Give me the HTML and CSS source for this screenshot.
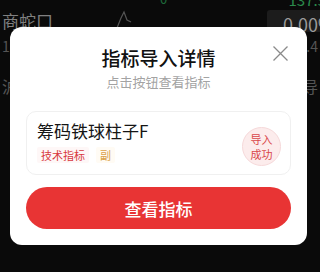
FILE: index.html
```html
<!DOCTYPE html>
<html lang="zh-CN">
<head>
<meta charset="utf-8">
<link rel="stylesheet" href="styles.css">
</head>
<body>
<div class="app">
  <div class="row row-top">
    <span class="zero">0</span>
    <span class="price">137.5</span>
  </div>
  <div class="row row-name">
    <span class="name">商蛇口</span>
    <svg class="spark" width="30" height="22" viewBox="0 0 30 22"><path d="M2 20 L10 18 L14 8 L17 2 L20 10 L24 12" fill="none" stroke="#555" stroke-width="1.2"/></svg>
    <span class="pct">0.00%</span>
  </div>
  <div class="row row-sub">
    <span class="dim">19</span>
    <span class="dim">9.4</span>
  </div>
  <div class="row row-sub2">
    <span class="dim">沪</span>
    <span class="dim">导</span>
  </div>
</div>

<div class="modal">
  <button class="close" aria-label="关闭">
    <svg width="15" height="15" viewBox="0 0 15 15"><path d="M0.5 0.5 L14.5 14.5 M14.5 0.5 L0.5 14.5" stroke="#8a8a8a" stroke-width="1.3" fill="none"/></svg>
  </button>
  <h1 class="title">指标导入详情</h1>
  <p class="subtitle">点击按钮查看指标</p>
  <div class="card">
    <div class="card-info">
      <div class="card-name">筹码铁球柱子F</div>
      <div class="tags">
        <span class="tag tag-red">技术指标</span>
        <span class="tag tag-gold">副</span>
      </div>
    </div>
    <div class="badge">导入<br>成功</div>
  </div>
  <button class="primary">查看指标</button>
</div>
</body>
</html>
```

FILE: styles.css
```css
html, body {
  margin: 0;
  padding: 0;
}
body {
  width: 320px;
  height: 272px;
  overflow: hidden;
  background: #0a0a0a;
  font-family: "Noto Sans CJK SC", "Noto Sans", sans-serif;
  position: relative;
}
.app {
  color: #6a6a6a;
}
.row {
  display: flex;
  justify-content: space-between;
  align-items: center;
}
.row-top {
  height: 10px;
  overflow: hidden;
  font-size: 15px;
  color: #1e6b3a;
}
.row-top .zero {
  margin-left: 160px;
  margin-top: -14px;
  font-size: 13px;
}
.row-top .price {
  margin-top: -12px;
  margin-right: -6px;
  color: #2a8a4c;
}
.row-name {
  height: 22px;
}
.name {
  font-size: 17px;
  line-height: 22px;
  margin-left: 2px;
  color: #808080;
}
.spark {
  margin-left: 54px;
  margin-right: auto;
}
.pct {
  width: 53px;
  height: 22px;
  box-sizing: border-box;
  padding-left: 16px;
  background: #1c1c1c;
  border-radius: 3px 0 0 3px;
  font-size: 18px;
  line-height: 28px;
  color: #9a9a9a;
  overflow: hidden;
  white-space: nowrap;
}
.row-sub {
  margin-top: 4px;
  height: 20px;
  font-size: 14px;
}
.row-sub2 {
  margin-top: 20px;
  height: 20px;
  font-size: 16px;
}
.dim {
  color: #555;
  margin: 0 2px;
}

.modal {
  position: absolute;
  left: 10px;
  top: 27px;
  width: 297px;
  height: 218px;
  box-sizing: border-box;
  padding: 19px 16px 16px;
  background: #fff;
  border-radius: 12px;
  display: flex;
  flex-direction: column;
  align-items: stretch;
}
.close {
  position: absolute;
  top: 19px;
  right: 19px;
  width: 15px;
  height: 15px;
  padding: 0;
  border: 0;
  background: none;
  display: block;
}
.close svg {
  display: block;
}
.title {
  margin: 0;
  text-align: center;
  font-size: 19px;
  line-height: 24px;
  font-weight: 500;
  color: #111;
}
.subtitle {
  margin: 3px 0 0;
  text-align: center;
  font-size: 13px;
  line-height: 18px;
  color: #a3a3a3;
}
.card {
  margin-top: 20px;
  height: 64px;
  box-sizing: border-box;
  border: 1px solid #f0f0f0;
  border-radius: 10px;
  padding: 8px 9px 0 10px;
  display: flex;
  justify-content: space-between;
  align-items: flex-start;
}
.card-name {
  font-size: 17px;
  line-height: 22px;
  color: #151515;
}
.tags {
  margin-top: 5px;
  display: flex;
  gap: 7px;
}
.tag {
  font-size: 11px;
  line-height: 16px;
  padding: 0 4px;
  border-radius: 2px;
}
.tag-red {
  color: #d8383d;
  background: #fef7f7;
}
.tag-gold {
  color: #dba24a;
  background: #fffbf4;
}
.badge {
  margin-top: 7px;
  width: 39px;
  height: 39px;
  box-sizing: border-box;
  border-radius: 50%;
  border: 1px solid #f6d9da;
  background: #fcecec;
  color: #d9464a;
  font-size: 11px;
  line-height: 15px;
  display: flex;
  align-items: center;
  justify-content: center;
  text-align: center;
}
.primary {
  margin-top: 12px;
  height: 42px;
  border: 0;
  border-radius: 21px;
  background: #e83434;
  color: #fff;
  font-family: inherit;
  font-size: 17px;
  font-weight: 500;
  padding: 0;
}
```
